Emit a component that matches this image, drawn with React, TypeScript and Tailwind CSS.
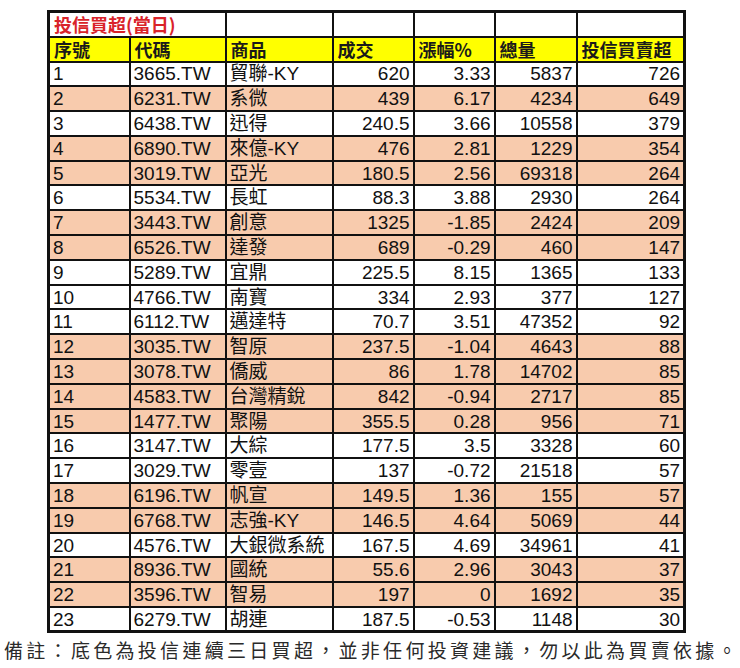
import React from 'react'

const rows: [string, string, string, string, string, string, string, boolean][] = [
  ['1', '3665.TW', '貿聯-KY', '620', '3.33', '5837', '726', false],
  ['2', '6231.TW', '系微', '439', '6.17', '4234', '649', true],
  ['3', '6438.TW', '迅得', '240.5', '3.66', '10558', '379', false],
  ['4', '6890.TW', '來億-KY', '476', '2.81', '1229', '354', true],
  ['5', '3019.TW', '亞光', '180.5', '2.56', '69318', '264', true],
  ['6', '5534.TW', '長虹', '88.3', '3.88', '2930', '264', false],
  ['7', '3443.TW', '創意', '1325', '-1.85', '2424', '209', true],
  ['8', '6526.TW', '達發', '689', '-0.29', '460', '147', true],
  ['9', '5289.TW', '宜鼎', '225.5', '8.15', '1365', '133', false],
  ['10', '4766.TW', '南寶', '334', '2.93', '377', '127', false],
  ['11', '6112.TW', '邁達特', '70.7', '3.51', '47352', '92', false],
  ['12', '3035.TW', '智原', '237.5', '-1.04', '4643', '88', true],
  ['13', '3078.TW', '僑威', '86', '1.78', '14702', '85', true],
  ['14', '4583.TW', '台灣精銳', '842', '-0.94', '2717', '85', true],
  ['15', '1477.TW', '聚陽', '355.5', '0.28', '956', '71', true],
  ['16', '3147.TW', '大綜', '177.5', '3.5', '3328', '60', false],
  ['17', '3029.TW', '零壹', '137', '-0.72', '21518', '57', false],
  ['18', '6196.TW', '帆宣', '149.5', '1.36', '155', '57', true],
  ['19', '6768.TW', '志強-KY', '146.5', '4.64', '5069', '44', true],
  ['20', '4576.TW', '大銀微系統', '167.5', '4.69', '34961', '41', false],
  ['21', '8936.TW', '國統', '55.6', '2.96', '3043', '37', true],
  ['22', '3596.TW', '智易', '197', '0', '1692', '35', true],
  ['23', '6279.TW', '胡連', '187.5', '-0.53', '1148', '30', false],
]

const headers = ['序號', '代碼', '商品', '成交', '漲幅%', '總量', '投信買賣超']

export default function App() {
  return (
    <div className="w-[740px] h-[668px] bg-white overflow-hidden font-['Liberation_Sans','Noto_Sans_CJK_TC',sans-serif] text-[#111]">
      <div className="pt-[10px] pl-[47px]">
        <table className="table-fixed border-collapse w-[636px] border-[3px] border-[#111]">
          <colgroup>
            <col className="w-[81px]" />
            <col className="w-[96px]" />
            <col className="w-[107px]" />
            <col className="w-[81px]" />
            <col className="w-[81px]" />
            <col className="w-[82px]" />
            <col className="w-[108px]" />
          </colgroup>
          <tbody>
            <tr className="h-[25px]">
              <td colSpan={2} className="border-2 border-[#111] px-[4px] py-0 leading-[20px] text-[18px] font-bold text-[#d9232a] whitespace-nowrap font-['Noto_Sans_CJK_TC',sans-serif]">
                投信買超(當日)
              </td>
              <td className="border-2 border-[#111]" />
              <td className="border-2 border-[#111]" />
              <td className="border-2 border-[#111]" />
              <td className="border-2 border-[#111]" />
              <td className="border-2 border-[#111]" />
            </tr>
            <tr className="h-[25px] bg-[#ffff00]">
              {headers.map((h) => (
                <td
                  key={h}
                  className="border-2 border-[#111] px-[4px] py-0 leading-[20px] text-[18px] font-bold text-[#1a1a1a] whitespace-nowrap overflow-hidden font-['Noto_Sans_CJK_TC',sans-serif]"
                >
                  {h}
                </td>
              ))}
            </tr>
            {rows.map((r) => (
              <tr key={r[0]} className={`h-[24.8px] ${r[7] ? 'bg-[#f8cbad]' : 'bg-white'}`}>
                <td className="border-2 border-[#111] px-[3px] py-0 leading-none text-[19px]">{r[0]}</td>
                <td className="border-2 border-[#111] px-[3px] py-0 leading-none text-[19px]">{r[1]}</td>
                <td className="border-2 border-[#111] px-[3px] py-0 leading-none text-[19px] whitespace-nowrap">{r[2]}</td>
                <td className="border-2 border-[#111] px-[3px] py-0 leading-none text-[19px] text-right">{r[3]}</td>
                <td className="border-2 border-[#111] px-[3px] py-0 leading-none text-[19px] text-right">{r[4]}</td>
                <td className="border-2 border-[#111] px-[3px] py-0 leading-none text-[19px] text-right">{r[5]}</td>
                <td className="border-2 border-[#111] px-[3px] py-0 leading-none text-[19px] text-right">{r[6]}</td>
              </tr>
            ))}
          </tbody>
        </table>
      </div>
      <p className="mt-[4px] pl-[4px] whitespace-nowrap text-[19px] leading-[26px] tracking-[3.3px] text-[#2a2a2a] font-['Noto_Sans_CJK_TC',sans-serif]">
        備註：底色為投信連續三日買超，並非任何投資建議，勿以此為買賣依據。
      </p>
    </div>
  )
}
